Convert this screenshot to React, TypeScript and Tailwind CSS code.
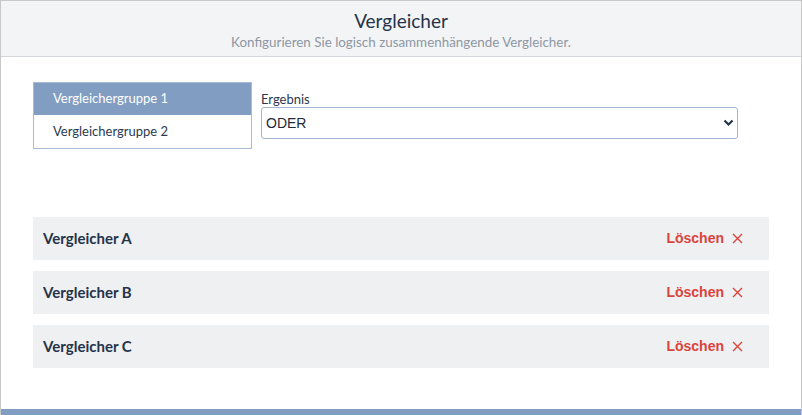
import { useState } from "react";

const comparators = ["Vergleicher A", "Vergleicher B", "Vergleicher C"];
const groups = ["Vergleichergruppe 1", "Vergleichergruppe 2"];

export default function App() {
  const [activeGroup, setActiveGroup] = useState(0);
  const [result, setResult] = useState("ODER");

  return (
    <div className="h-[415px] w-[802px] overflow-hidden bg-white font-['Lato',sans-serif] text-[#2c3a4f]">
      <div className="flex h-full flex-col border border-[#c8c8c8] border-b-0">
        {/* Kopfbereich */}
        <header className="flex h-[56px] shrink-0 flex-col items-center justify-center border-b border-[#d3d6db] bg-[#f3f4f6] pt-[2px]">
          <h1 className="text-[19px] leading-[24px] text-[#253349]">Vergleicher</h1>
          <p className="text-[13.4px] leading-[18px] text-[#8d97a3]">
            Konfigurieren Sie logisch zusammenhängende Vergleicher.
          </p>
        </header>

        <main className="flex flex-1 flex-col px-[32px] pt-[25px]">
          <div className="flex gap-[9px]">
            <div className="flex w-[219px] flex-col border border-[#a9bbd3]">
              {groups.map((g, i) => (
                <button
                  key={g}
                  type="button"
                  onClick={() => setActiveGroup(i)}
                  className={
                    i === activeGroup
                      ? "h-[32px] bg-[#819dc1] pl-[19px] text-left text-[13px] text-white"
                      : "h-[33px] bg-white pl-[19px] text-left text-[13px] text-[#2c3a4f]"
                  }
                >
                  {g}
                </button>
              ))}
            </div>

            <div className="flex w-[477px] flex-col pt-[9px]">
              <label className="text-[13px] leading-[16px] text-[#2c3a4f]">Ergebnis</label>
              <div className="relative">
                <select
                  value={result}
                  onChange={(e) => setResult(e.target.value)}
                  className="h-[32px] w-full appearance-none rounded-[3px] border border-[#a3b6d0] bg-white pl-[4px] font-['Liberation_Sans',sans-serif] text-[14px] text-[#1f2a3a] outline-none"
                >
                  <option>ODER</option>
                  <option>UND</option>
                </select>
                <svg
                  className="pointer-events-none absolute right-[4px] top-[12px]"
                  width="11"
                  height="8"
                  viewBox="0 0 11 8"
                >
                  <path d="M1.5 1.5 L5.5 5.5 L9.5 1.5" stroke="#253349" strokeWidth="2.2" fill="none" />
                </svg>
              </div>
            </div>
          </div>

          <div className="mt-[68px] flex w-[736px] flex-col gap-[11px]">
            {comparators.map((c) => (
              <div key={c} className="flex h-[43px] items-center justify-between bg-[#eff0f2] pl-[10px] pr-[26px]">
                <span className="text-[15px] font-bold text-[#253349]">{c}</span>
                <button
                  type="button"
                  className="flex items-center gap-[8px] font-['Liberation_Sans',sans-serif] text-[14px] font-semibold text-[#d9443b]"
                >
                  Löschen
                  <svg width="11" height="11" viewBox="0 0 11 11">
                    <path d="M1 1 L10 10 M10 1 L1 10" stroke="#d9443b" strokeWidth="1.4" />
                  </svg>
                </button>
              </div>
            ))}
          </div>
        </main>

        <div className="h-[6px] shrink-0 bg-[#819dc1]" />
      </div>
    </div>
  );
}
